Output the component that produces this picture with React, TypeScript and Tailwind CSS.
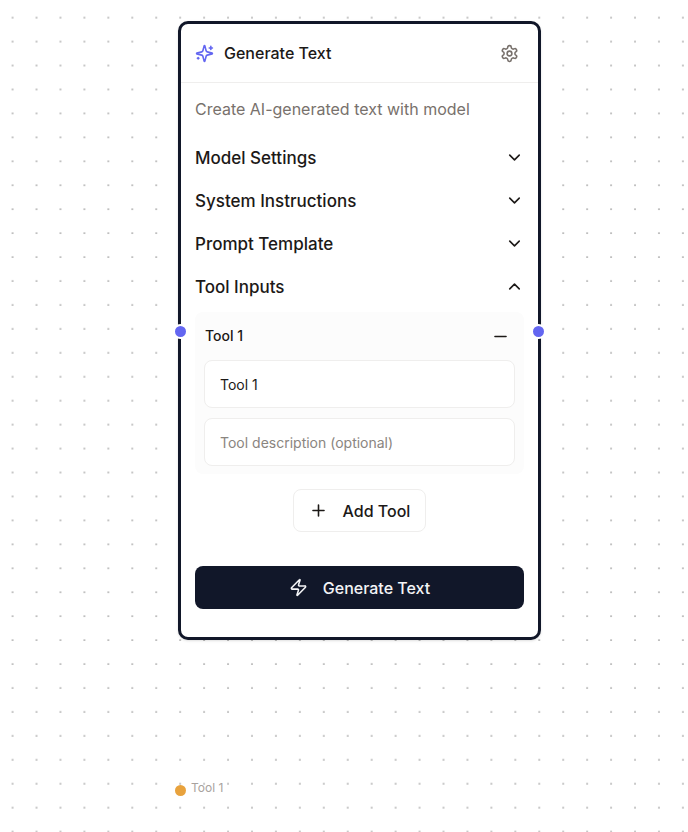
import { useState } from "react";
import { ChevronDown, ChevronUp, Minus, Plus, Zap } from "lucide-react";

const closedSections = ["Model Settings", "System Instructions", "Prompt Template"];

function SparklesIcon() {
  return (
    <svg
      viewBox="0 0 24 24"
      className="size-[19px] text-[#6366f1]"
      fill="none"
      stroke="currentColor"
      strokeWidth="2"
      strokeLinecap="round"
      strokeLinejoin="round"
      aria-hidden="true"
    >
      <path d="M9.937 15.5A2 2 0 0 0 8.5 14.063l-6.135-1.582a.5.5 0 0 1 0-.962L8.5 9.936A2 2 0 0 0 9.937 8.5l1.582-6.135a.5.5 0 0 1 .963 0L14.063 8.5A2 2 0 0 0 15.5 9.937l6.135 1.581a.5.5 0 0 1 0 .964L15.5 14.063a2 2 0 0 0-1.437 1.437l-1.582 6.135a.5.5 0 0 1-.963 0z" />
      <path d="M20 3v4M22 5h-4M4 17v2M5 18H3" />
    </svg>
  );
}

function GearIcon() {
  return (
    <svg
      viewBox="0 0 24 24"
      className="size-[19px]"
      fill="none"
      stroke="currentColor"
      strokeWidth="2"
      strokeLinecap="round"
      strokeLinejoin="round"
      aria-hidden="true"
    >
      <path d="M12.22 2h-.44a2 2 0 0 0-2 2v.18a2 2 0 0 1-1 1.73l-.43.25a2 2 0 0 1-2 0l-.15-.08a2 2 0 0 0-2.73.73l-.22.38a2 2 0 0 0 .73 2.73l.15.1a2 2 0 0 1 1 1.72v.51a2 2 0 0 1-1 1.74l-.15.09a2 2 0 0 0-.73 2.73l.22.38a2 2 0 0 0 2.73.73l.15-.08a2 2 0 0 1 2 0l.43.25a2 2 0 0 1 1 1.73V20a2 2 0 0 0 2 2h.44a2 2 0 0 0 2-2v-.18a2 2 0 0 1 1-1.73l.43-.25a2 2 0 0 1 2 0l.15.08a2 2 0 0 0 2.73-.73l.22-.39a2 2 0 0 0-.73-2.73l-.15-.08a2 2 0 0 1-1-1.74v-.5a2 2 0 0 1 1-1.74l.15-.09a2 2 0 0 0 .73-2.73l-.22-.38a2 2 0 0 0-2.73-.73l-.15.08a2 2 0 0 1-2 0l-.43-.25a2 2 0 0 1-1-1.73V4a2 2 0 0 0-2-2z" />
      <circle cx="12" cy="12" r="3" />
    </svg>
  );
}

function SectionToggle({ label, open = false }: { label: string; open?: boolean }) {
  const Icon = open ? ChevronUp : ChevronDown;
  return (
    <button
      type="button"
      aria-expanded={open}
      className="flex h-[43px] w-full items-center justify-between text-left text-[17px] font-medium leading-6"
    >
      {label}
      <Icon size={19} strokeWidth={2} />
    </button>
  );
}

function Handle({ className }: { className: string }) {
  return (
    <span
      className={`absolute size-[15px] rounded-full border-2 border-white bg-[#6366f1] ${className}`}
    />
  );
}

function DotGrid() {
  return (
    <svg className="absolute inset-0 h-full w-full" aria-hidden="true">
      <pattern id="dots" x="0.6" y="5.6" width="23.94" height="23.94" patternUnits="userSpaceOnUse">
        <circle cx="12" cy="12" r="0.9" fill="#a0a0a0" />
      </pattern>
      <rect width="100%" height="100%" fill="url(#dots)" />
    </svg>
  );
}

function GenerateTextNode() {
  const [name, setName] = useState("Tool 1");
  const [description, setDescription] = useState("");
  const field =
    "h-12 w-full rounded-lg border border-[#efeeed] bg-white px-[15px] text-sm leading-5 outline-none placeholder:text-[#8a8580]";
  return (
    <section className="absolute left-[178px] top-[21px] w-[363px] rounded-[10px] border-[3px] border-[#111729] bg-white shadow-sm">
      <header className="flex h-[59px] items-center gap-[10px] border-b border-[#efeeed] pl-[14px] pr-[19px]">
        <SparklesIcon />
        <h1 className="flex-1 text-base font-medium leading-6">Generate Text</h1>
        <button type="button" aria-label="Node settings" className="text-[#78716c]">
          <GearIcon />
        </button>
      </header>

      <div className="px-[14px] pb-7">
        <p className="pb-[15px] pt-[14px] text-base leading-6 text-[#78716c]">
          Create AI-generated text with model
        </p>
        {closedSections.map((label) => (
          <SectionToggle key={label} label={label} />
        ))}
        <SectionToggle label="Tool Inputs" open />

        <div className="mt-1 flex flex-col gap-[10px] rounded-lg bg-[#fcfcfc] px-[9px] pb-2">
          <div className="flex h-[38px] items-center justify-between pl-px pr-[5px] pt-[10px]">
            <h2 className="text-sm font-medium leading-6">Tool 1</h2>
            <button type="button" aria-label="Remove tool">
              <Minus size={19} strokeWidth={2} />
            </button>
          </div>
          <input
            aria-label="Tool name"
            value={name}
            onChange={(e) => setName(e.target.value)}
            className={field}
          />
          <input
            aria-label="Tool description"
            placeholder="Tool description (optional)"
            value={description}
            onChange={(e) => setDescription(e.target.value)}
            className={field}
          />
        </div>

        <div className="flex justify-center pb-[34px] pt-[15px]">
          <button
            type="button"
            className="flex h-[43px] items-center gap-[15px] rounded-lg border border-[#efeeed] px-[15px] text-base font-medium leading-6"
          >
            <Plus size={19} strokeWidth={2} />
            Add Tool
          </button>
        </div>

        <button
          type="submit"
          className="flex h-[43px] w-full items-center justify-center gap-[15px] rounded-lg bg-[#111729] text-base font-medium leading-6 text-[#f3f4f6]"
        >
          <Zap size={19} strokeWidth={2} />
          Generate Text
        </button>
      </div>

      <Handle className="-left-2 top-[300px]" />
      <Handle className="-right-2 top-[300px]" />
    </section>
  );
}

export default function App() {
  return (
    <main className="relative min-h-screen overflow-hidden bg-white font-[Inter,sans-serif] text-[#1c1917]">
      <DotGrid />
      <GenerateTextNode />
      <div className="absolute left-[175px] top-[780px] flex items-start gap-[5px]">
        <span className="mt-[5px] size-[11px] rounded-full bg-[#e8a23d]" />
        <span className="text-xs leading-4 text-[#a8a29e]">Tool 1</span>
      </div>
    </main>
  );
}
